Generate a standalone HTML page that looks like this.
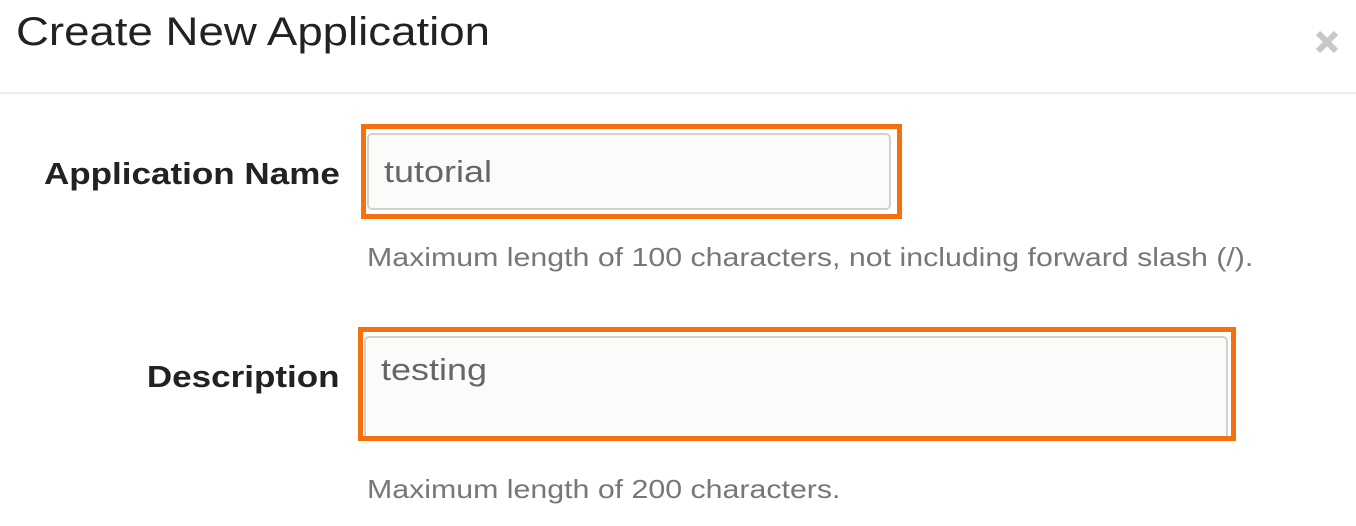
<!DOCTYPE html>
<html><head><style>
html,body{margin:0;padding:0;background:#fff;width:1356px;height:526px;overflow:hidden;font-family:"Liberation Sans",Arial,sans-serif;}
.abs{position:absolute;}
.sx{display:inline-block;transform-origin:0 0;white-space:nowrap;}
.title{left:16px;top:10px;font-size:40px;color:#222;}
.close{left:1313px;top:28px;}
.hr{left:0;top:92px;width:1356px;height:2px;background:#eeeee8;}
.lbl{font-weight:bold;font-size:31px;color:#222;right:1016px;}
.lbl .sx{transform-origin:100% 0;}
.ob{border:5px solid #f5700f;box-sizing:border-box;}
.inp{background:#fbfbf9;border:2px solid #d2d2cc;border-radius:5px;box-sizing:border-box;font-size:31px;color:#666;padding-left:15px;}
.help{font-size:26px;color:#777;left:367px;}
</style></head><body>
<div class="abs title"><span class="sx" style="transform:scaleX(1.14)">Create New Application</span></div>
<svg class="abs close" width="28" height="28" viewBox="0 0 28 28"><path d="M5 5L23 23M23 5L5 23" stroke="#c8c8c8" stroke-width="6"/></svg>
<div class="abs hr"></div>

<div class="abs lbl" style="top:156px"><span class="sx" style="transform:scaleX(1.13)">Application Name</span></div>
<div class="abs ob" style="left:361px;top:124px;width:541px;height:95px"></div>
<div class="abs inp" style="left:367px;top:133px;width:524px;height:77px;line-height:73px"><span class="sx" style="transform:scaleX(1.16)">tutorial</span></div>
<div class="abs help" style="top:242px"><span class="sx" style="transform:scaleX(1.166)">Maximum length of 100 characters, not including forward slash (/).</span></div>

<div class="abs lbl" style="top:359px"><span class="sx" style="transform:scaleX(1.13)">Description</span></div>
<div class="abs inp" style="left:364px;top:336px;width:864px;height:120px;padding-top:14px;line-height:36px"><span class="sx" style="transform:scaleX(1.16)">testing</span></div>
<div class="abs" style="left:358px;top:436px;width:878px;height:20px;background:#fff"></div>
<div class="abs ob" style="left:358px;top:327px;width:878px;height:114px"></div>
<div class="abs help" style="top:474px"><span class="sx" style="transform:scaleX(1.166)">Maximum length of 200 characters.</span></div>
</body></html>
